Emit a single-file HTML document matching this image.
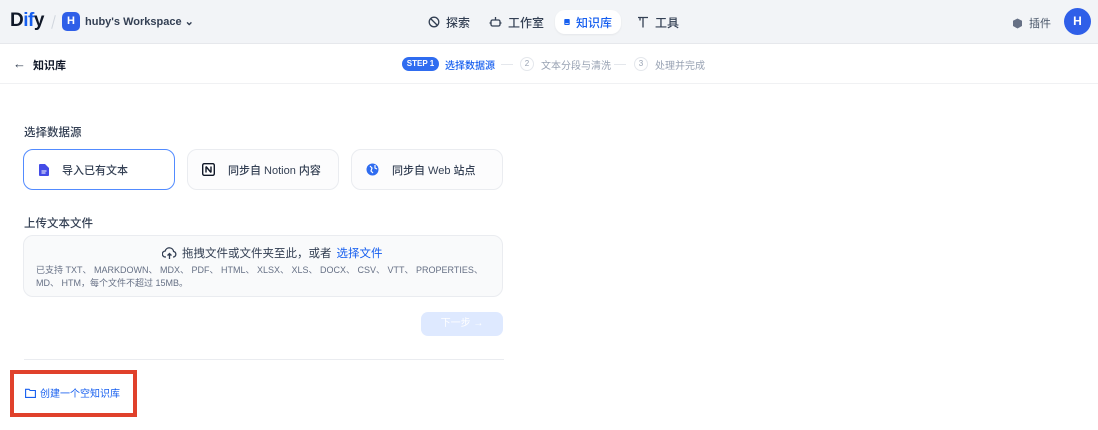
<!DOCTYPE html>
<html><head><meta charset="utf-8"><style>
*{box-sizing:border-box;margin:0;padding:0}
body{width:1098px;height:430px;overflow:hidden;background:#fff;font-family:"Liberation Sans","Noto Sans CJK SC",sans-serif;color:#101828;position:relative}
.hdr{position:absolute;left:0;top:0;width:1098px;height:44px;background:#f2f4f7;border-bottom:1px solid #e6e8ec}
.abs{position:absolute}
.nav{position:absolute;top:10px;height:24px;font-size:12px;font-weight:500;color:#344054;display:flex;align-items:center;gap:6px;padding:0 9px;border-radius:10px;white-space:nowrap}
.sub{position:absolute;left:0;top:44px;width:1098px;height:40px;border-bottom:1px solid #f0f1f3}
.card{position:absolute;top:149px;height:41px;border:1px solid #eaecf0;border-radius:10px;background:#fcfcfd;display:flex;align-items:center;font-size:11px;font-weight:500;color:#344054;white-space:nowrap}
</style></head><body>
<div class="hdr">
  <div class="abs" style="left:10px;top:10px;font-size:19px;font-weight:700;color:#101828;letter-spacing:-0.5px">D<span style="color:#155eef">if</span>y</div>
  <div class="abs" style="left:53px;top:15px;width:1px;height:14px;background:#d0d5dd;transform:rotate(15deg)"></div>
  <div class="abs" style="left:62px;top:12px;width:18px;height:19px;border-radius:5px;background:#2f5fe8;color:#fff;font-size:11px;font-weight:600;text-align:center;line-height:19px">H</div>
  <div class="abs" style="left:85px;top:15px;font-size:11px;font-weight:600;color:#344054">huby's Workspace ⌄</div>
  <div class="nav" style="left:419px"><svg width="12" height="12" viewBox="0 0 12 12" fill="none" stroke="#344054" stroke-width="1.3"><circle cx="6" cy="6" r="4.8"/><path d="M3 3l6 6"/></svg>探索</div>
  <div class="nav" style="left:480px"><svg width="13" height="12" viewBox="0 0 13 12" fill="none" stroke="#344054" stroke-width="1.3"><rect x="2" y="4" width="9" height="6" rx="1.5"/><path d="M6.5 1v3M0.5 7h1.5M11 7h1.5"/></svg>工作室</div>
  <div class="nav" style="left:555px;background:#fff;color:#155eef;box-shadow:0 1px 2px rgba(0,0,0,.06);width:66px"><svg width="11" height="12" viewBox="0 0 11 12"><rect x="0.5" y="0.5" width="10" height="11" rx="1.5" fill="#155eef"/><rect x="2.5" y="8" width="6" height="1.3" fill="#fff"/></svg>知识库</div>
  <div class="nav" style="left:628px"><svg width="12" height="12" viewBox="0 0 12 12" fill="none" stroke="#344054" stroke-width="1.3"><path d="M1 1.5h10M6 1.5v10M3 1.5v3"/></svg>工具</div>
  <div class="abs" style="left:1012px;top:15px;font-size:11px;color:#475467;display:flex;gap:6px;align-items:center"><svg width="11" height="11" viewBox="0 0 11 11"><path d="M5.5 0.5l4.5 2.3v5.2l-4.5 2.5-4.5-2.5V2.8z" fill="#667085"/></svg>插件</div>
  <div class="abs" style="left:1064px;top:8px;width:27px;height:27px;border-radius:50%;background:#2f5fe8;color:#fff;font-size:12px;font-weight:600;text-align:center;line-height:27px">H</div>
</div>
<div class="sub">
  <div class="abs" style="left:13px;top:12px;font-size:13px;color:#344054">←</div>
  <div class="abs" style="left:33px;top:13px;font-size:11px;font-weight:600;color:#101828">知识库</div>
  <div class="abs" style="left:402px;top:13px;width:37px;height:14px;border-radius:7px;background:#2f6cf0;color:#fff;font-size:8px;font-weight:700;text-align:center;line-height:14px">STEP 1</div>
  <div class="abs" style="left:445px;top:13px;font-size:10px;font-weight:500;color:#155eef">选择数据源</div>
  <div class="abs" style="left:501px;top:20px;width:12px;height:1px;background:#e4e7ec"></div>
  <div class="abs" style="left:520px;top:13px;width:14px;height:14px;border:1px solid #e4e7ec;border-radius:50%;font-size:8px;color:#98a2b3;text-align:center;line-height:12px">2</div>
  <div class="abs" style="left:541px;top:13px;font-size:10px;color:#98a2b3">文本分段与清洗</div>
  <div class="abs" style="left:614px;top:20px;width:12px;height:1px;background:#e4e7ec"></div>
  <div class="abs" style="left:634px;top:13px;width:14px;height:14px;border:1px solid #e4e7ec;border-radius:50%;font-size:8px;color:#98a2b3;text-align:center;line-height:12px">3</div>
  <div class="abs" style="left:655px;top:13px;font-size:10px;color:#98a2b3">处理并完成</div>
</div>
<div class="abs" style="left:24px;top:124px;font-size:11.5px;font-weight:500;color:#344054">选择数据源</div>
<div class="card" style="left:23px;width:152px;border:1.5px solid #528bff;background:#fff"><svg style="margin:0 13px 0 15px" width="10" height="12" viewBox="0 0 10 12"><path d="M1 0h5l4 4v7a1 1 0 01-1 1H1a1 1 0 01-1-1V1a1 1 0 011-1z" fill="#444ce7"/><path d="M2.5 7h5M2.5 9h4" stroke="#fff" stroke-width="1"/></svg>导入已有文本</div>
<div class="card" style="left:187px;width:152px"><svg style="margin:0 13px 0 14px" width="13" height="13" viewBox="0 0 13 13"><rect x="0.7" y="0.7" width="11.6" height="11.6" rx="1.5" fill="#fff" stroke="#101828" stroke-width="1.4"/><path d="M4 3.5v6M4 3.5l5 6M9 3.5v6" stroke="#101828" stroke-width="1.4" fill="none"/></svg>同步自 Notion 内容</div>
<div class="card" style="left:351px;width:152px"><svg style="margin:0 13px 0 14px" width="13" height="13" viewBox="0 0 13 13"><circle cx="6.5" cy="6.5" r="6" fill="#2f6cf0"/><path d="M4 3l2 2-1 3 2 2M9 2v3l2 1" stroke="#fff" stroke-width="1.2" fill="none"/></svg>同步自 Web 站点</div>
<div class="abs" style="left:24px;top:215px;font-size:11.5px;font-weight:500;color:#344054">上传文本文件</div>
<div class="abs" style="left:23px;top:235px;width:480px;height:62px;border:1px solid #eaecf0;border-radius:10px;background:#f9fafb"></div>
<div class="abs" style="left:162px;top:245px;font-size:11.5px;color:#344054;display:flex;align-items:center;gap:5px"><svg width="15" height="13" viewBox="0 0 15 13" fill="none" stroke="#344054" stroke-width="1.3"><path d="M4 10H3.5a3 3 0 01-.3-6A4.3 4.3 0 0111.6 4.5 2.8 2.8 0 0111.5 10H11M7.5 12V6.5M5.5 8.5l2-2 2 2"/></svg>拖拽文件或文件夹至此，或者 <span style="color:#155eef">选择文件</span></div>
<div class="abs" style="left:36px;top:264px;font-size:9px;color:#667085;line-height:12.5px;width:460px">已支持 TXT、 MARKDOWN、 MDX、 PDF、 HTML、 XLSX、 XLS、 DOCX、 CSV、 VTT、 PROPERTIES、<br>MD、 HTM，每个文件不超过 15MB。</div>
<div class="abs" style="left:421px;top:312px;width:82px;height:24px;border-radius:7px;background:#d1e0ff;opacity:.7;color:#fff;font-size:10px;text-align:center;line-height:24px">下一步 →</div>
<div class="abs" style="left:24px;top:359px;width:480px;height:1px;background:#eaecf0"></div>
<div class="abs" style="left:10px;top:370px;width:127px;height:47px;border:4px solid #e0412b"></div>
<div class="abs" style="left:25px;top:385px;font-size:10px;color:#155eef;display:flex;align-items:center;gap:4px"><svg width="11" height="10" viewBox="0 0 11 10" fill="none" stroke="#155eef" stroke-width="1.1"><path d="M0.6 1.3h3.5l1 1.2h5.3v6.9H0.6z"/></svg>创建一个空知识库</div>
</body></html>
